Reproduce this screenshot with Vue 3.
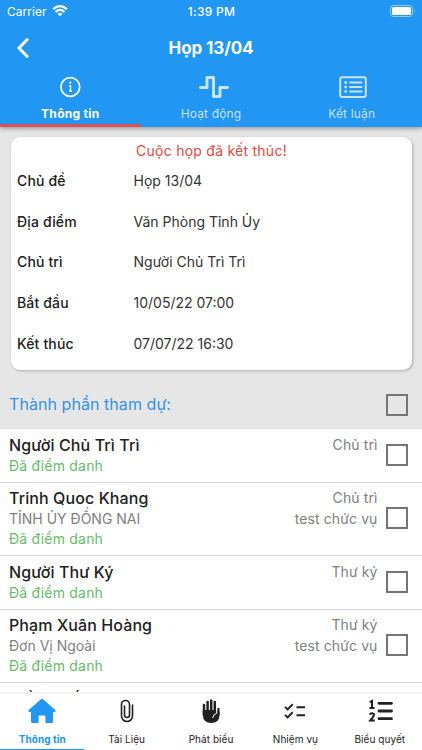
<template>
  <div class="app">
    <header class="header">
      <div class="status">
        <div class="carrier">
          <span>Carrier</span>
          <svg width="16" height="12" viewBox="0 0 16 12" fill="none" stroke="#fff" stroke-width="2.1">
            <path d="M1 4.2Q8-1.9 15 4.2M3.5 6.9Q8 3 12.5 6.9" />
            <path d="M8 11.2 5.5 8.8Q8 6.7 10.5 8.8Z" fill="#fff" stroke="none" />
          </svg>
        </div>
        <span class="clock">1:39 PM</span>
        <svg class="battery" width="26" height="12" viewBox="0 0 26 12">
          <rect x=".5" y=".5" width="22" height="11" rx="3" fill="none" stroke="#fff" stroke-opacity=".5" />
          <rect x="2" y="2" width="19" height="8" rx="1.5" fill="#fff" />
          <path d="M24 4q1.4 2 0 4z" fill="#fff" fill-opacity=".6" />
        </svg>
      </div>

      <div class="titlebar">
        <svg width="14" height="22" viewBox="0 0 14 22" fill="none" stroke="#fff" stroke-width="2.9">
          <path d="M12 1.7 3 11l9 9.3" />
        </svg>
        <h1>Họp 13/04</h1>
      </div>

      <nav class="tabs">
        <button
          v-for="tab in tabs"
          :key="tab.id"
          class="tab"
          :class="{ active: tab.id === activeTab }"
          @click="activeTab = tab.id"
        >
          <svg v-if="tab.id === 'info'" width="22" height="22" viewBox="0 0 22 22" fill="none" stroke="currentColor" stroke-width="1.8">
            <circle cx="11.300" cy="11" r="9.400" />
            <path d="M10 9.600h1.500V15.500M10 15.300h3" stroke-width="1.400" />
            <circle cx="11.300" cy="6.700" r="1.100" fill="currentColor" stroke="none" />
          </svg>
          <svg v-else-if="tab.id === 'activity'" class="pulse" width="32" height="24" viewBox="0 0 32 24" fill="none" stroke="currentColor" stroke-width="2.900" stroke-linecap="round" stroke-linejoin="round">
            <path d="M2.500 12.500H9V2.500h6.500v19H22v-9h7.500" />
          </svg>
          <svg v-else class="list" width="28" height="22" viewBox="0 0 28 22" fill="none" stroke="currentColor" stroke-width="2" stroke-linecap="round">
            <rect x="1.200" y="1.200" width="25.600" height="19.800" rx="2" />
            <path d="M11 6.500h11.500M11 11h11.500M11 15.500h11.500" stroke-width="2" />
            <path d="M6.700 6.500h.01M6.700 11h.01M6.700 15.500h.01" stroke-width="2.900" />
          </svg>
          <span>{{ tab.label }}</span>
        </button>
      </nav>
    </header>

    <main class="content">
      <section class="card">
        <p class="notice">Cuộc họp đã kết thúc!</p>
        <dl>
          <div v-for="item in details" :key="item.label" class="detail">
            <dt>{{ item.label }}</dt>
            <dd>{{ item.value }}</dd>
          </div>
        </dl>
      </section>

      <div class="section-head">
        <h2>Thành phần tham dự:</h2>
        <span class="check" :class="{ on: allSelected }" @click="toggleAll"></span>
      </div>

      <ul class="people">
        <li v-for="person in people" :key="person.name" class="person">
          <div class="who">
            <div class="name">{{ person.name }}</div>
            <div v-if="person.unit" class="unit">{{ person.unit }}</div>
            <div class="present">Đã điểm danh</div>
          </div>
          <div class="role">
            <div>{{ person.role }}</div>
            <div v-if="person.position">{{ person.position }}</div>
          </div>
          <span class="check" :class="{ on: person.selected }" @click="person.selected = !person.selected"></span>
        </li>
      </ul>
    </main>

    <nav class="bottom">
      <button
        v-for="item in menu"
        :key="item.id"
        class="menu-item"
        :class="{ active: item.id === activeMenu }"
        @click="activeMenu = item.id"
      >
        <svg v-if="item.id === 'home'" width="28" height="26" viewBox="0 0 28 26" fill="currentColor">
          <path d="M13 1.2q1-.9 2 0L27.3 12q1 1.6-.8 1.9H25v9.6q0 1.5-1.5 1.5h-5.2q-.9 0-.9-.9v-5.5q0-1.1-1.1-1.1h-4.6q-1.1 0-1.1 1.1v5.5q0 .9-.9.9H4.5Q3 25 3 23.5V13.9H1.5Q-.3 13.6.7 12z" />
        </svg>
        <svg v-else-if="item.id === 'docs'" width="14" height="24" viewBox="0 0 14 24" fill="none" stroke="currentColor" stroke-width="1.6" stroke-linecap="round">
          <path d="M12.5 6v11a5.500 5.500 0 0 1-11 0V5.500a4 4 0 0 1 8 0V16a2.500 2.500 0 0 1-5 0V7" />
        </svg>
        <svg v-else-if="item.id === 'speak'" width="18" height="26" viewBox="0 0 18 26" fill="none" stroke="currentColor" stroke-linecap="round">
          <path d="M2 7V16M5.600 4V14M9.200 2.500V14M12.800 4V14" stroke-width="2.500" />
          <path d="M16.400 11v6" stroke-width="2.300" />
          <path d="M.75 12h13.400l3.400 2v3q-.3 8-8.300 8T.75 17z" fill="currentColor" stroke="none" />
          <path d="M10.800 19.500q.3-3.200 3.900-4.200v-4" stroke="#fff" stroke-width="1" />
        </svg>
        <svg v-else-if="item.id === 'tasks'" width="22" height="16" viewBox="0 0 22 16" fill="none" stroke="currentColor" stroke-width="2">
          <path d="m1 3.9 2.600 2.500L8.700 1.300M1 11.900l2.600 2.500 5.100-5.100M12.500 4.300H21M12.500 12.300H21" />
        </svg>
        <svg v-else class="numbers" width="26" height="24" viewBox="0 0 26 24" fill="none" stroke="currentColor" stroke-width="2.800" stroke-linecap="round">
          <path d="M11 4.300h12.500M11 12h12.500M11 19.700h12.500" />
          <path d="M1.700 3.200 4 2V9M1.500 9h5M1.700 15.700q.7-1.700 2.600-1.500 2.200.4 1.500 2.500Q5.300 18 2.300 21.500h4.500" stroke-width="2" stroke-linecap="butt" />
        </svg>
        <span>{{ item.label }}</span>
      </button>
    </nav>
  </div>
</template>

<script setup>
import { ref, computed } from 'vue'

const activeTab = ref('info')
const activeMenu = ref('home')

const tabs = [
  { id: 'info', label: 'Thông tin' },
  { id: 'activity', label: 'Hoạt động' },
  { id: 'result', label: 'Kết luận' }
]

const details = [
  { label: 'Chủ đề', value: 'Họp 13/04' },
  { label: 'Địa điểm', value: 'Văn Phòng Tỉnh Ủy' },
  { label: 'Chủ trì', value: 'Người Chủ Trì Trì' },
  { label: 'Bắt đầu', value: '10/05/22 07:00' },
  { label: 'Kết thúc', value: '07/07/22 16:30' }
]

const people = ref([
  { name: 'Người Chủ Trì Trì', role: 'Chủ trì', selected: false },
  { name: 'Trinh Quoc Khang', unit: 'TỈNH ỦY ĐỒNG NAI', role: 'Chủ trì', position: 'test chức vụ', selected: false },
  { name: 'Người Thư Ký', role: 'Thư ký', selected: false },
  { name: 'Phạm Xuân Hoàng', unit: 'Đơn Vị Ngoài', role: 'Thư ký', position: 'test chức vụ', selected: false },
  { name: 'Trần Quốc', role: '', selected: false }
])

const menu = [
  { id: 'home', label: 'Thông tin' },
  { id: 'docs', label: 'Tài Liệu' },
  { id: 'speak', label: 'Phát biểu' },
  { id: 'tasks', label: 'Nhiệm vụ' },
  { id: 'vote', label: 'Biểu quyết' }
]

const allSelected = computed(() => people.value.every((p) => p.selected))

function toggleAll() {
  const next = !allSelected.value
  people.value.forEach((p) => (p.selected = next))
}
</script>

<style>
body {
  margin: 0;
}
</style>

<style scoped>
.app {
  display: flex;
  flex-direction: column;
  width: 422px;
  height: 750px;
  overflow: hidden;
  background: #e6e6e6;
  font-family: Inter, 'Liberation Sans', sans-serif;
  color: #212121;
}
h1,
h2,
p,
dl,
dd,
ul {
  margin: 0;
  padding: 0;
}
button {
  border: 0;
  padding: 0;
  background: none;
  font: inherit;
  color: inherit;
}
svg {
  display: block;
  flex: none;
}
.header {
  flex: none;
  height: 127px;
  background: #2196f3;
  color: #fff;
  box-shadow: 0 2px 4px rgba(0, 0, 0, 0.3);
  z-index: 1;
}
.status {
  display: grid;
  grid-template-columns: 1fr auto 1fr;
  align-items: center;
  height: 22px;
  padding: 0 6px 0 7px;
  font-size: 12px;
}
.carrier {
  display: flex;
  align-items: center;
  gap: 5px;
  letter-spacing: 0.05px;
}
.clock {
  font-weight: 500;
  letter-spacing: 0.3px;
}
.battery {
  justify-self: end;
}
.titlebar {
  display: grid;
  grid-template-columns: 60px 1fr 60px;
  align-items: center;
  height: 52px;
}
.titlebar svg {
  margin-left: 16px;
}
h1 {
  text-align: center;
  font-size: 17px;
  line-height: 22px;
  font-weight: 700;
  letter-spacing: -0.1px;
}
.tabs {
  display: flex;
  height: 53px;
}
.tab {
  flex: 1;
  display: grid;
  grid-template-rows: 26px 27px;
  place-items: center;
  height: 53px;
  border-bottom: 3px solid transparent;
  font-size: 12px;
  letter-spacing: 0.15px;
  color: rgba(255, 255, 255, 0.75);
}
.tab.active {
  color: #fff;
  font-weight: 700;
  letter-spacing: 0.3px;
  border-bottom-color: #d9515a;
}
.pulse {
  margin-left: 5px;
}
.list {
  margin-left: 3px;
}
.content {
  flex: 1;
  min-height: 0;
  overflow: hidden;
}
.card {
  height: 233px;
  margin: 10px 10px 0 11px;
  border-radius: 9px;
  background: #fff;
  box-shadow: 1px 1px 3px rgba(0, 0, 0, 0.25);
}
.notice {
  padding-top: 2px;
  line-height: 24px;
  text-align: center;
  font-size: 14px;
  letter-spacing: 0.25px;
  color: #e2483f;
}
.detail {
  display: flex;
  height: 40.7px;
  padding-left: 6px;
  font-size: 14px;
  line-height: 36px;
}
dt {
  width: 116.5px;
  font-weight: 500;
  letter-spacing: 0.15px;
}
dd {
  color: #333;
}
.section-head {
  display: flex;
  align-items: center;
  justify-content: space-between;
  height: 49px;
  margin-top: 10px;
  padding: 0 14px 0 9px;
}
h2 {
  font-size: 16px;
  font-weight: 400;
  letter-spacing: 0.06px;
  line-height: 20px;
  padding-bottom: 1px;
  color: #3293e3;
}
.check {
  flex: none;
  box-sizing: border-box;
  width: 22px;
  height: 22px;
  border: 2px solid #757575;
}
.check.on {
  background: #2196f3;
  border-color: #2196f3;
}
.people {
  list-style: none;
  background: #fff;
}
.person {
  display: flex;
  align-items: center;
  padding: 4.500px 14px 5.800px 9px;
  border-bottom: 1px solid #d8d8d8;
  font-size: 14px;
  line-height: 20.200px;
}
.who {
  flex: 1;
}
.name {
  font-size: 16px;
  line-height: 22px;
  font-weight: 500;
  letter-spacing: 0.1px;
}
.unit,
.role {
  color: #808080;
}
.present {
  color: #66bb6a;
  letter-spacing: 0.2px;
}
.role {
  align-self: flex-start;
  text-align: right;
  margin-right: 8.500px;
  letter-spacing: 0.1px;
}
.role div:first-child {
  line-height: 22px;
}
.bottom {
  flex: none;
  display: flex;
  height: 56px;
  border-top: 2px solid #f4f4f4;
  background: #fff;
}
.menu-item {
  flex: 1;
  display: grid;
  grid-template-rows: 33px 24px;
  place-items: center;
  height: 56px;
  border-bottom: 1px solid transparent;
  font-size: 10px;
  letter-spacing: 0.05px;
}
.menu-item.active {
  color: #2196f3;
  font-weight: 700;
  border-bottom-color: #2196f3;
}
.numbers {
  margin-left: 2px;
}
</style>
